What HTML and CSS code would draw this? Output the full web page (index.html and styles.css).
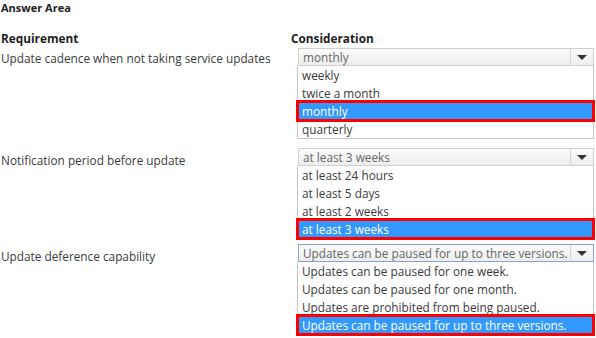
FILE: index.html
```html
<html>
  <head>
    <meta http-equiv="Content-Type" content="text/html; charset=UTF-8" />
    <title>Answer Area</title>
    <link rel="stylesheet" href="styles.css">
  </head>
  <body>
  <h1 class="title">Answer Area</h1>

  <div class="grid">
    <div class="head">Requirement</div>
    <div class="head">Consideration</div>

    <div class="label">Update cadence when not taking service updates</div>
    <div class="drop first">
      <div class="select">
        <span class="value">monthly</span>
        <span class="arrow"></span>
      </div>
      <ul class="list">
        <li>weekly</li>
        <li>twice a month</li>
        <li class="picked">monthly</li>
        <li>quarterly</li>
      </ul>
    </div>

    <div class="label">Notification period before update</div>
    <div class="drop second">
      <div class="select">
        <span class="value">at least 3 weeks</span>
        <span class="arrow"></span>
      </div>
      <ul class="list">
        <li>at least 24 hours</li>
        <li>at least 5 days</li>
        <li>at least 2 weeks</li>
        <li class="picked">at least 3 weeks</li>
      </ul>
    </div>

    <div class="label">Update deference capability</div>
    <div class="drop third">
      <div class="select focus">
        <span class="value">Updates can be paused for up to three versions.</span>
        <span class="arrow"></span>
      </div>
      <ul class="list">
        <li>Updates can be paused for one week.</li>
        <li>Updates can be paused for one month.</li>
        <li>Updates are prohibited from being paused.</li>
        <li class="picked">Updates can be paused for up to three versions.</li>
      </ul>
    </div>
  </div>
  </body>
</html>
```

FILE: styles.css
```css
body {
  margin: 0;
  font-family: "Open Sans", sans-serif;
  font-size: 11.8px;
  color: #3a3a3a;
  background: #fff;
}
.title {
  font-size: 11px;
  font-weight: bold;
  color: #222;
  margin: 0;
  padding: 0 0 0 1px;
  line-height: 16px;
}
.grid {
  display: grid;
  grid-template-columns: 297px 297px;
  margin-top: 14px;
}
.head {
  font-weight: bold;
  color: #222;
  line-height: 16px;
  padding-left: 1px;
}
.head + .head {
  margin-left: -7px;
}
.label {
  padding-left: 1px;
  padding-top: 3px;
  line-height: 18px;
}
.drop {
  margin-top: 2px;
}
.second, .third {
  margin-top: 0;
}
.first {
  margin-bottom: 9px;
}
.second {
  margin-bottom: 5px;
}
.select {
  height: 16px;
  border: 1px solid #cfcfcf;
  background: linear-gradient(#fbfbfb, #eeeeee);
  display: flex;
  align-items: center;
  margin-left: 1px;
}
.select.focus {
  border-color: #8aa3cc;
}
.value {
  flex: 1;
  padding-left: 4px;
  color: #666;
  white-space: nowrap;
  overflow: hidden;
}
.arrow {
  width: 22px;
  height: 16px;
  border-left: 1px solid #d4d4d4;
  position: relative;
}
.arrow::after {
  content: "";
  position: absolute;
  left: 6px;
  top: 6px;
  border-left: 5px solid transparent;
  border-right: 5px solid transparent;
  border-top: 5px solid #333;
}
.list {
  list-style: none;
  margin: 0;
  padding: 0;
  border: 1px solid #c4c4c4;
  border-top: none;
  background: #fff;
}
.list li {
  height: 18px;
  line-height: 18px;
  padding-left: 4px;
  white-space: nowrap;
}
.list li.picked {
  background: #3399ff;
  color: #fff;
  outline: 3px solid #f00;
  outline-offset: -1px;
  position: relative;
}
```
